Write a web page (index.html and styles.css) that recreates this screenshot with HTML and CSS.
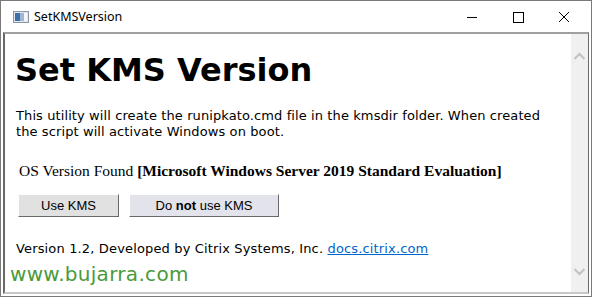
FILE: index.html
```html
<!DOCTYPE html>
<html lang="en">
<head>
  <meta charset="UTF-8">
  <title>SetKMSVersion</title>
  <link rel="stylesheet" href="styles.css">
</head>
<body>
  <div class="window">
    <div class="titlebar">
      <svg class="app-icon" width="16" height="12" viewBox="0 0 16 12">
        <rect x="0.5" y="0.5" width="15" height="11" fill="#dfe6ee" stroke="#8a97a6"/>
        <rect x="2" y="2" width="5" height="8" fill="#3d6fa8"/>
        <rect x="7" y="2" width="4" height="8" fill="#9fb7d2"/>
        <rect x="11" y="2" width="3" height="8" fill="#f4f6f9"/>
      </svg>
      <span class="title">SetKMSVersion</span>
      <div class="controls">
        <svg width="46" height="32" viewBox="0 0 46 32"><path d="M18 16.5h10" stroke="#000" stroke-width="1"/></svg>
        <svg width="46" height="32" viewBox="0 0 46 32"><rect x="18.5" y="11.5" width="10" height="10" fill="none" stroke="#000"/></svg>
        <svg width="46" height="32" viewBox="0 0 46 32"><path d="M18 11l10 10M28 11l-10 10" stroke="#000" stroke-width="1"/></svg>
      </div>
    </div>

    <div class="frame">
      <div class="content">
        <h1>Set KMS Version</h1>
        <p class="intro">This utility will create the runipkato.cmd file in the kmsdir folder. When created the script will activate Windows on boot.</p>
        <p class="os">OS Version Found <b>[Microsoft Windows Server 2019 Standard Evaluation]</b></p>
        <div class="buttons">
          <button class="btn btn-use">Use KMS</button>
          <button class="btn btn-no">Do <b>not</b> use KMS</button>
        </div>
        <p class="footer">Version 1.2, Developed by Citrix Systems, Inc. <a href="#">docs.citrix.com</a></p>
      </div>
      <div class="scrollbar">
        <svg width="17" height="17" viewBox="0 0 17 17"><path d="M3.5 11l5-5 5 5" fill="none" stroke="#c2c2c2" stroke-width="2"/></svg>
        <svg width="17" height="17" viewBox="0 0 17 17"><path d="M3.5 6l5 5 5-5" fill="none" stroke="#c2c2c2" stroke-width="2"/></svg>
      </div>
    </div>

    <div class="watermark">www.bujarra.com</div>
  </div>
</body>
</html>
```

FILE: styles.css
```css
/***----BASIC----***/
body {
  margin: 0;
  background: #fff;
  font-family: 'DejaVu Sans', Verdana, sans-serif;
}
.window {
  position: relative;
  width: 592px;
  height: 297px;
  box-sizing: border-box;
  border: 1px solid #7a7a7a;
  background: #fff;
  display: flex;
  flex-direction: column;
}

/***----Title Bar----***/
.titlebar {
  height: 31px;
  display: flex;
  align-items: center;
  padding-left: 12px;
}
.app-icon {
  margin-right: 5px;
}
.title {
  font-family: 'Noto Sans', 'Open Sans', sans-serif;
  font-size: 12.5px;
  color: #000;
}
.controls {
  margin-left: auto;
  margin-right: 4px;
  display: flex;
}

/***----Frame----***/
.frame {
  flex: 1;
  display: flex;
  margin: 0 2px 2px 2px;
  border-top: 2px solid #a0a0a0;
  border-left: 2px solid #696969;
  border-right: 1px solid #696969;
  border-bottom: 2px solid #c8c8c8;
}
.content {
  flex: 1;
  padding: 0 10px 0 11px;
  color: #000;
}
.scrollbar {
  width: 17px;
  background: #f0f0f0;
  display: flex;
  flex-direction: column;
  justify-content: space-between;
  padding: 14px 0 12px;
}

/***----Text----***/
h1 {
  font-size: 32px;
  font-weight: 700;
  margin: 16px 0 0 -1px;
  line-height: 40px;
}
.intro {
  font-size: 13px;
  letter-spacing: 0.1px;
  line-height: 16px;
  margin: 18px 0 0 0;
}
.os {
  font-family: 'Liberation Serif', 'Times New Roman', serif;
  font-size: 15.5px;
  margin: 22px 0 0 3px;
}
.buttons {
  display: flex;
  gap: 10px;
  margin: 14px 0 0 2px;
}
.btn {
  height: 23px;
  font-family: 'Liberation Sans', Arial, sans-serif;
  font-size: 13px;
  color: #000;
  background: #e1e1e1;
  border: 1px solid;
  border-color: #fff #696969 #696969 #fff;
  padding: 0;
}
.btn-use {
  width: 101px;
}
.btn-no {
  width: 150px;
  background: #e3e3ec;
}
.footer {
  font-size: 13px;
  letter-spacing: 0.15px;
  margin: 24px 0 0 0;
}
.footer a {
  color: #0066cc;
}

/* watermark */
.watermark {
  position: absolute;
  left: 9px;
  top: 261px;
  font-size: 20px;
  color: #4a9a3a;
  letter-spacing: 0.3px;
}
```
